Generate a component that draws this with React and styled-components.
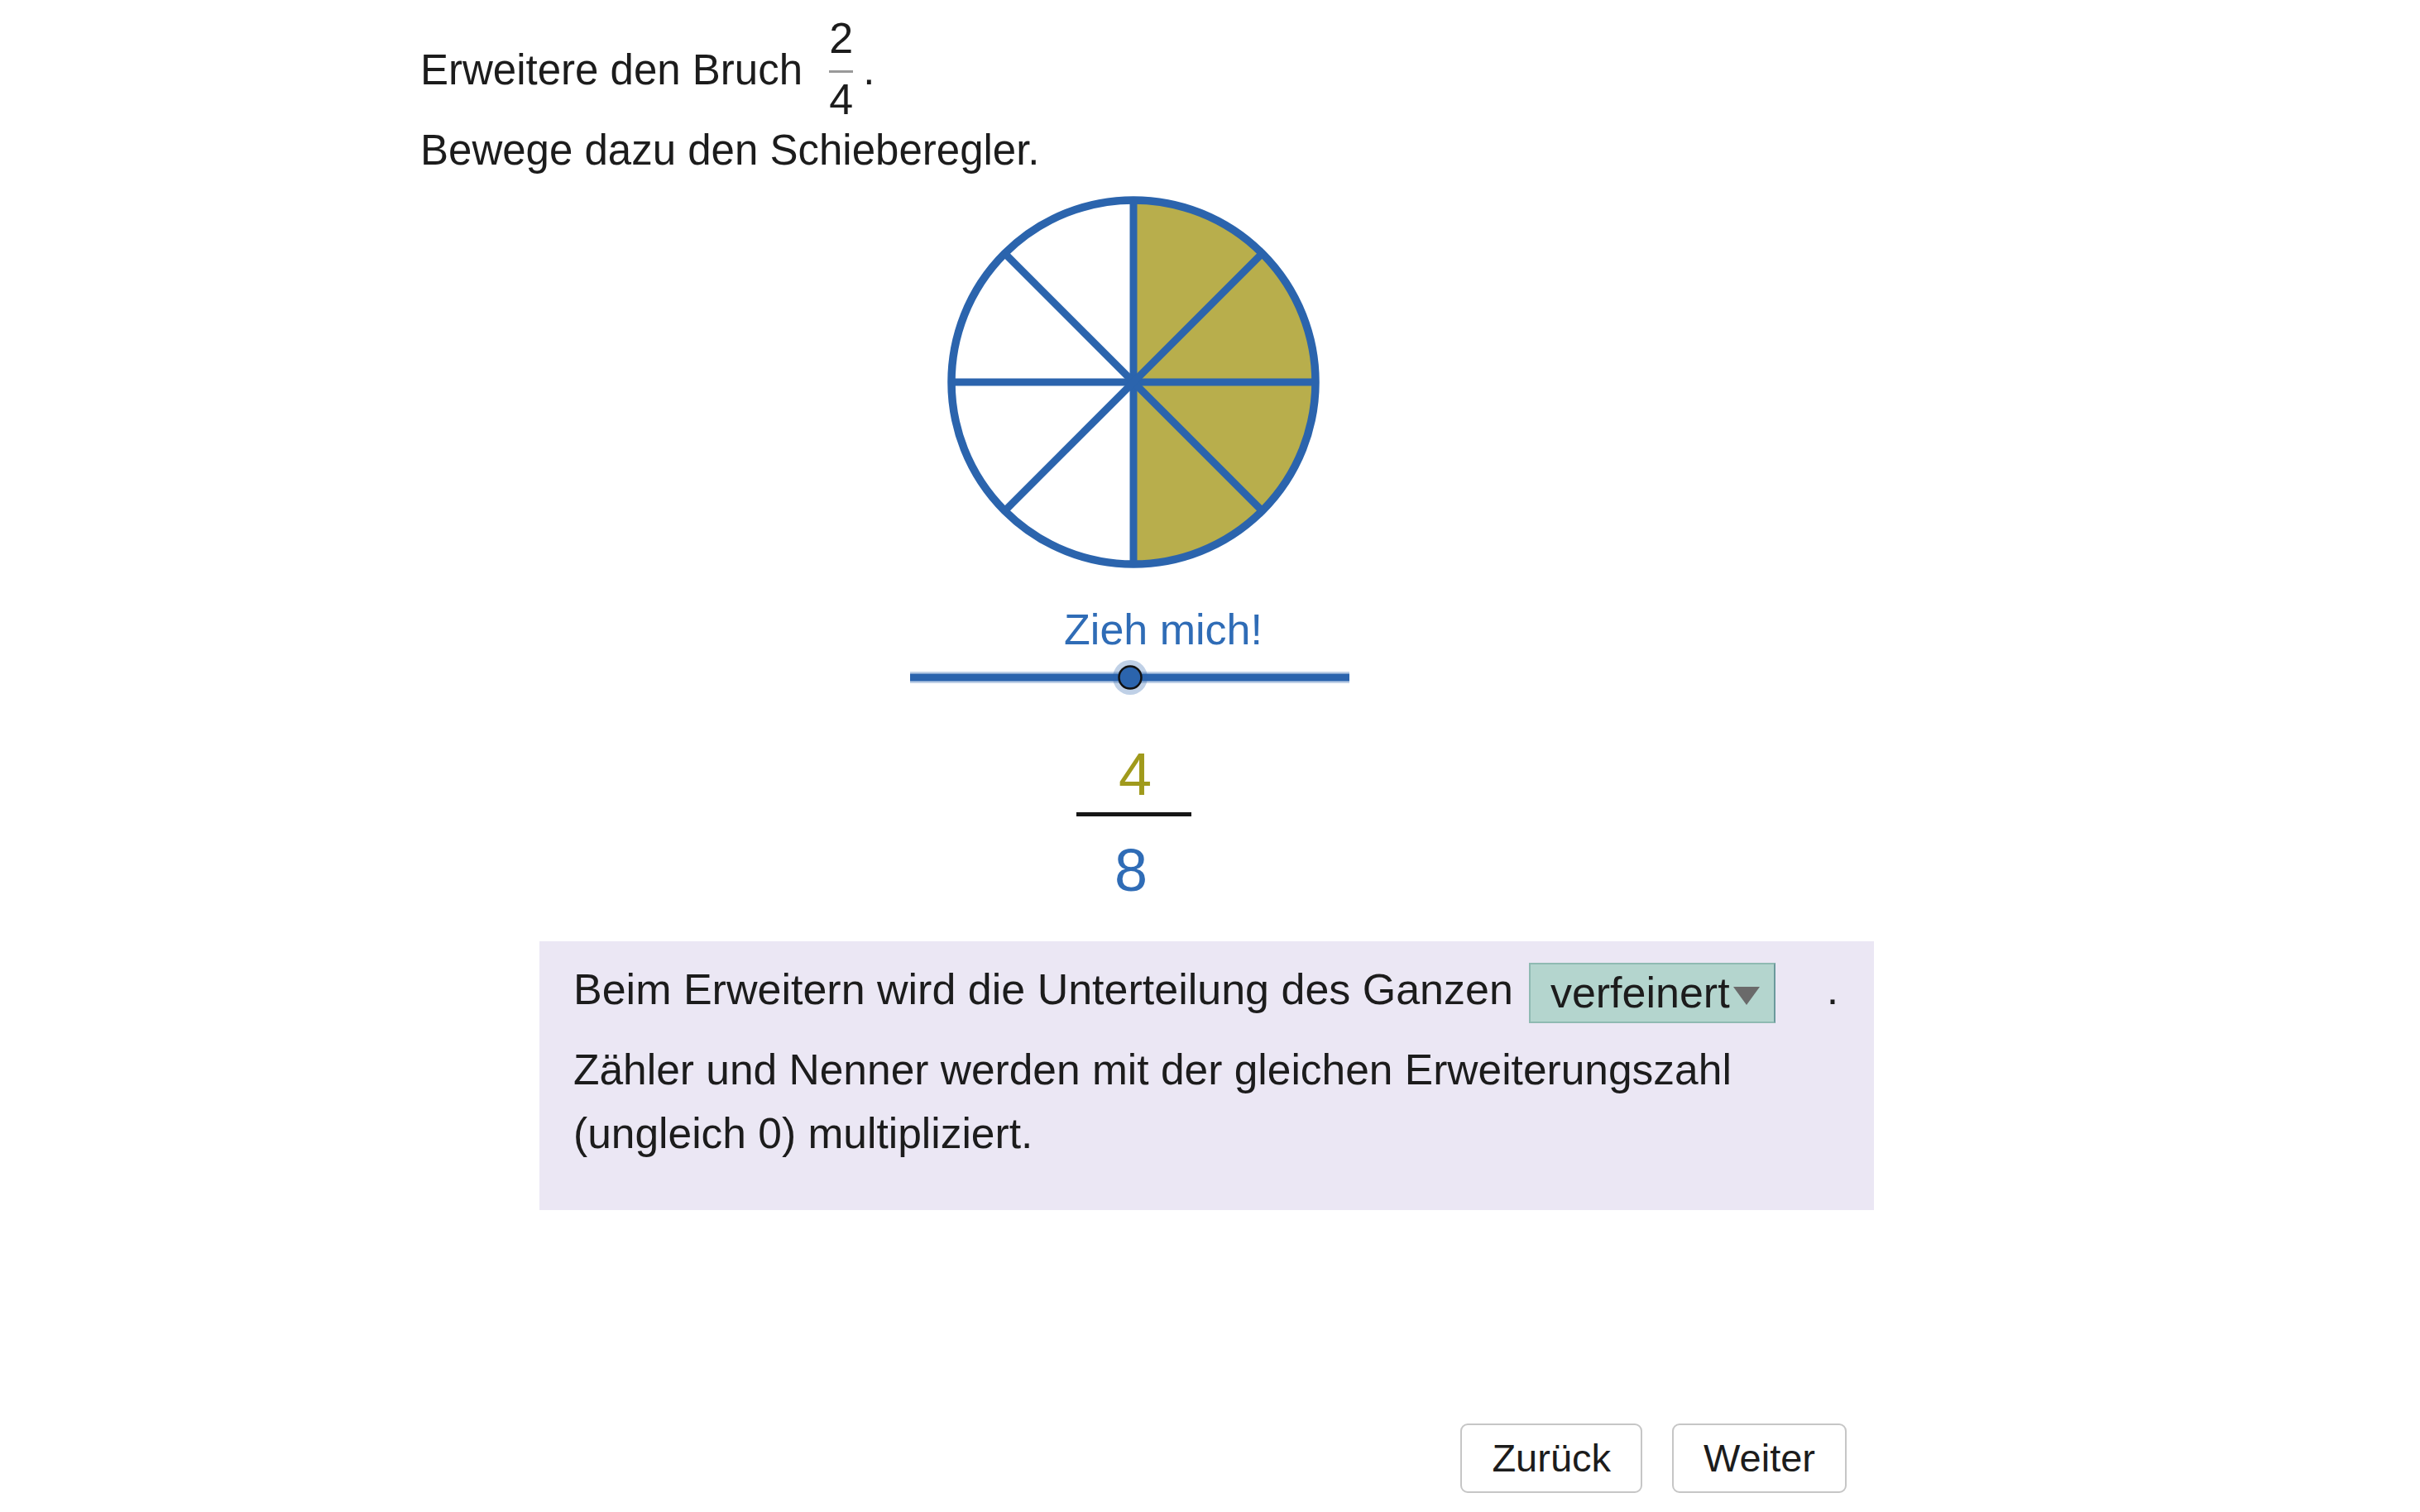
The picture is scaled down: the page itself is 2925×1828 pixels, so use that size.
import React from "react";
import styled, { createGlobalStyle } from "styled-components";

const BLUE = "#2b64ad";
const TEXT_BLUE = "#2f6cb6";
const OLIVE_FILL = "#b8ae4c";
const OLIVE_TEXT = "#a09a1c";

const GlobalStyle = createGlobalStyle`
  html, body {
    margin: 0;
    padding: 0;
    background: #ffffff;
  }
  body {
    font-family: "Liberation Sans", Arial, sans-serif;
    color: #1c1c1c;
    -webkit-font-smoothing: antialiased;
  }
`;

const Page = styled.div`
  width: 2925px;
  min-height: 1828px;
  padding-top: 20px;
  box-sizing: border-box;
  overflow: hidden;
`;

const Instructions = styled.div`
  margin-left: 508px;
  font-size: 51px;
  line-height: 72px;
`;

const Line = styled.div`
  white-space: nowrap;
`;

const InlineFraction = styled.span`
  display: inline-flex;
  flex-direction: column;
  align-items: center;
  vertical-align: 38px;
  padding: 0 2px;
  margin: 0 10px 0 16px;
  font-size: 52px;
`;

const FracDigit = styled.span`
  display: block;
  height: 52px;
  line-height: 52px;
`;

const FracBar = styled.span`
  display: block;
  align-self: stretch;
  height: 3px;
  margin: 13px 0 6px;
  background: #9a9a9a;
`;

const Applet = styled.div`
  margin-top: 14px;
  margin-left: 1070px;
  width: 600px;
  display: flex;
  flex-direction: column;
  align-items: center;
`;

const PieSvg = styled.svg`
  display: block;
  width: 460px;
  height: 460px;
`;

const SliderLabel = styled.div`
  margin-top: 40px;
  margin-left: 72px;
  font-size: 52px;
  line-height: 58px;
  color: ${TEXT_BLUE};
  white-space: nowrap;
`;

const SliderSvg = styled.svg`
  display: block;
  width: 568px;
  height: 44px;
  margin-top: 7px;
`;

const BigFraction = styled.div`
  margin-top: 59px;
  display: flex;
  flex-direction: column;
  align-items: center;
  font-size: 72px;
  line-height: 72px;
`;

const BigDigit = styled.div`
  height: 72px;
  color: ${(p) => p.$color};
  margin-top: ${(p) => p.$offset || 0}px;
  margin-left: ${(p) => p.$shift || 0}px;
`;

const BigBar = styled.div`
  width: 139px;
  height: 5px;
  margin-top: 10px;
  background: #161616;
`;

const InfoBox = styled.div`
  margin-top: 50px;
  margin-left: 652px;
  width: 1613px;
  height: 325px;
  box-sizing: border-box;
  padding: 20px 40px 0 41px;
  background: #ebe7f4;
  font-size: 52px;
`;

const InfoLine = styled.div`
  line-height: 77px;
  white-space: nowrap;
`;

const InfoText = styled.div`
  margin-top: 18px;
  font-size: 51.5px;
  line-height: 77px;
`;

const Dropdown = styled.span`
  display: inline-flex;
  align-items: center;
  gap: 3px;
  height: 73px;
  box-sizing: border-box;
  vertical-align: middle;
  margin-left: 19px;
  padding: 0 16px 0 24px;
  line-height: 58px;
  background: #b4d5ce;
  border: 2px solid #8fbab2;
  border-right-color: #6b999c;
  color: #1c1c1c;
`;

const Caret = styled.svg`
  display: block;
  width: 34px;
  height: 24px;
  margin-top: 8px;
`;

const Period = styled.span`
  margin-left: 62px;
`;

const Nav = styled.div`
  margin-top: 258px;
  padding-right: 693px;
  display: flex;
  justify-content: flex-end;
  gap: 36px;
`;

const NavButton = styled.button`
  font-family: "Liberation Sans", Arial, sans-serif;
  font-size: 47px;
  line-height: 54px;
  padding: 13px 36px;
  border: 2px solid #c6c6c6;
  border-radius: 9px;
  background: #ffffff;
  color: #1c1c1c;
  cursor: pointer;
`;

function PieChart() {
  const c = 230;
  const r = 220;
  const d = r * Math.SQRT1_2;
  const spokes = [
    [c, c - r, c, c + r],
    [c - r, c, c + r, c],
    [c - d, c - d, c + d, c + d],
    [c - d, c + d, c + d, c - d],
  ];
  return (
    <PieSvg viewBox="0 0 460 460">
      <path
        d={`M${c},${c} L${c},${c - r} A${r},${r} 0 0 1 ${c},${c + r} Z`}
        fill={OLIVE_FILL}
      />
      <circle cx={c} cy={c} r={r} fill="none" stroke={BLUE} strokeWidth="9.5" />
      {spokes.map(([x1, y1, x2, y2], i) => (
        <line
          key={i}
          x1={x1}
          y1={y1}
          x2={x2}
          y2={y2}
          stroke={BLUE}
          strokeWidth="9"
        />
      ))}
    </PieSvg>
  );
}

function Slider({ x0, x1, knob }) {
  return (
    <SliderSvg viewBox="0 0 568 44">
      <line x1={x0} y1="22" x2={x1} y2="22" stroke={BLUE} strokeOpacity="0.3" strokeWidth="14" />
      <line x1={x0} y1="22" x2={x1} y2="22" stroke={BLUE} strokeWidth="9" />
      <circle cx={knob} cy="22" r="21" fill={BLUE} fillOpacity="0.3" />
      <circle cx={knob} cy="22" r="13.5" fill={BLUE} stroke="#111" strokeWidth="2.5" />
    </SliderSvg>
  );
}

export default function App() {
  return (
    <>
      <GlobalStyle />
      <Page>
        <Instructions>
          <Line>
            Erweitere den Bruch
            {" "}
            <InlineFraction>
              <FracDigit>2</FracDigit>
              <FracBar />
              <FracDigit>4</FracDigit>
            </InlineFraction>
            .
          </Line>
          <Line>Bewege dazu den Schieberegler.</Line>
        </Instructions>

        <Applet>
          <PieChart />
          <SliderLabel>Zieh mich!</SliderLabel>
          <Slider x0={14} x1={545} knob={280} />
          <BigFraction>
            <BigDigit $color={OLIVE_TEXT} $shift={4}>4</BigDigit>
            <BigBar />
            <BigDigit $color={TEXT_BLUE} $offset={29} $shift={-6}>8</BigDigit>
          </BigFraction>
        </Applet>

        <InfoBox>
          <InfoLine>
            Beim Erweitern wird die Unterteilung des Ganzen
            <Dropdown>
              verfeinert
              <Caret viewBox="0 0 34 24">
                <path d="M1,1 L33,1 L17,23 Z" fill="#6a6a6a" />
              </Caret>
            </Dropdown>
            <Period>.</Period>
          </InfoLine>
          <InfoText>
            Zähler und Nenner werden mit der gleichen Erweiterungszahl
            <br />
            (ungleich 0) multipliziert.
          </InfoText>
        </InfoBox>

        <Nav>
          <NavButton>Zurück</NavButton>
          <NavButton>Weiter</NavButton>
        </Nav>
      </Page>
    </>
  );
}
